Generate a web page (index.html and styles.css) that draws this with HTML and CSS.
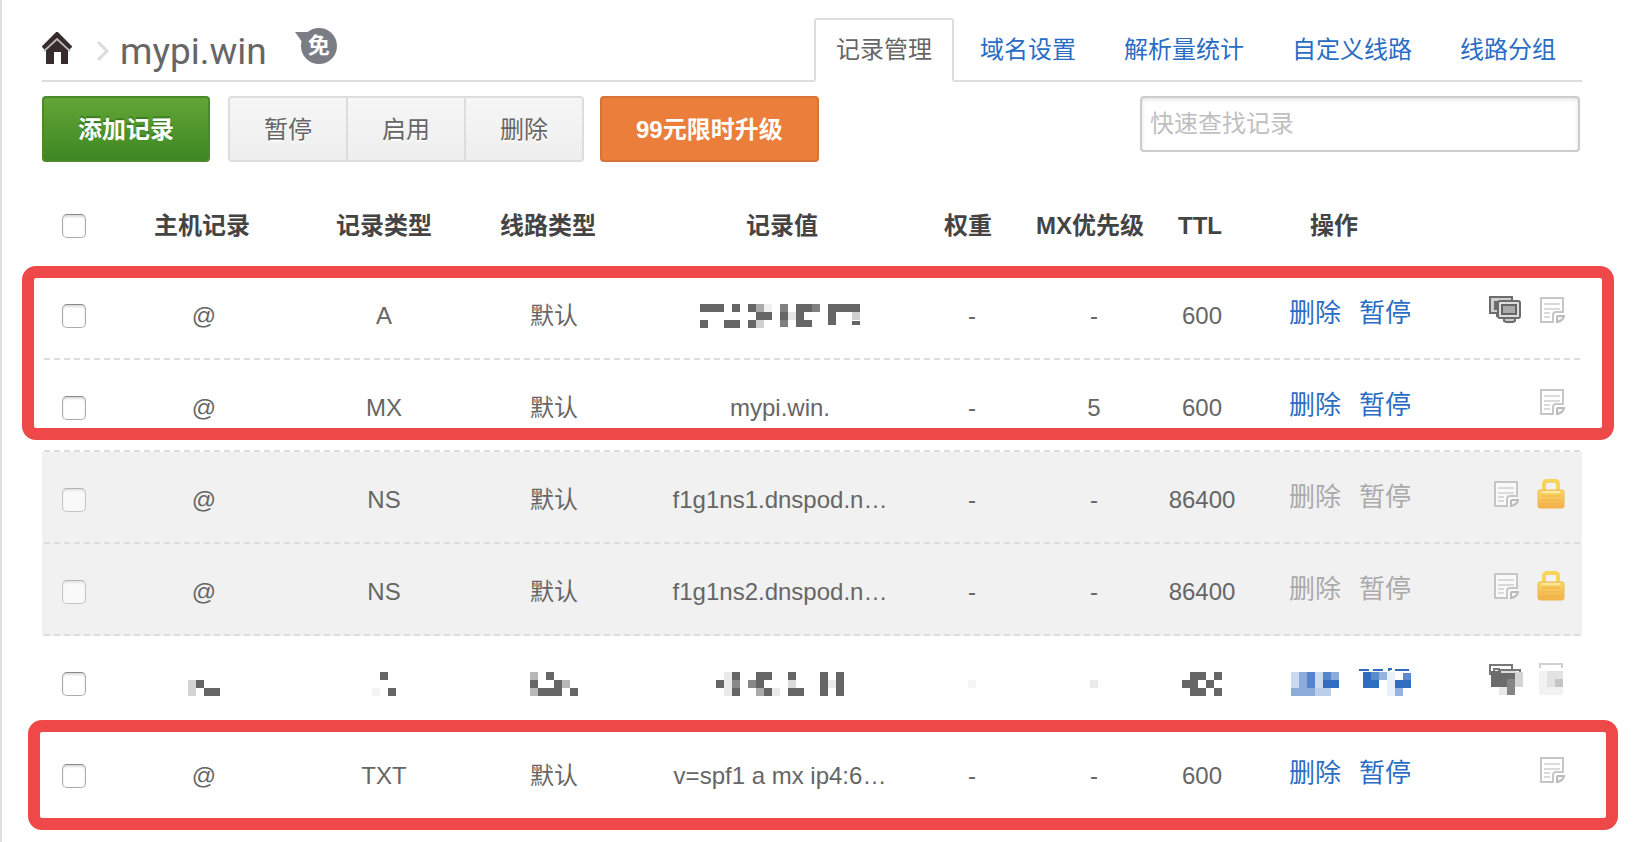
FILE: index.html
```
<!DOCTYPE html>
<html lang="zh-CN">
<head>
<meta charset="utf-8">
<title>mypi.win</title>
<link rel="stylesheet" href="styles.css">
</head>
<body>

<!-- 共用图标 -->
<svg class="sprite" aria-hidden="true">
  <linearGradient id="gold" x1="0" y1="0" x2="0" y2="1">
    <stop offset="0" stop-color="#fbd968"/>
    <stop offset="1" stop-color="#f3b049"/>
  </linearGradient>
  <symbol id="note" viewBox="0 0 26 28">
    <path d="M2 2h22v16l-6 8H2z" fill="#fff" fill-opacity=".6"/>
    <path d="M24 16V2H2v24h12v-7q0-3 3-3z" fill="none" stroke="#c6c6c6" stroke-width="2"/>
    <path d="M5 8h16M5 13h16M5 17h6M5 21h6" stroke="#dadada" stroke-width="2"/>
    <path d="M18 26v-5q0-1 1-1h6q-1 5-7 6z" fill="#f4f4f4" stroke="#bbb" stroke-width="2"/>
  </symbol>
  <symbol id="screens" viewBox="0 0 32 28">
    <path d="M2 2h21v15H2z" fill="#d0d0d0"/>
    <path d="M23 5V1H1v16h7v3h3" fill="none" stroke="#6c6c6c" stroke-width="2"/>
    <path d="M5 5h12v9H5z" fill="#6c6c6c"/>
    <path d="M15 22h11v3l-2 1h-7l-2-1z" fill="#ccc" stroke="#6c6c6c" stroke-width="2"/>
    <rect x="9" y="5" width="22" height="17" rx="2" fill="#dedede" stroke="#6c6c6c" stroke-width="2"/>
    <rect x="13" y="9" width="14" height="9" fill="#aaa" stroke="#666" stroke-width="2"/>
  </symbol>
  <symbol id="lock" viewBox="0 0 28 30">
    <path d="M7 12V5q0-3 3-3h8q3 0 3 3v7" fill="none" stroke="#f7d55a" stroke-width="4"/>
    <rect x="1" y="11" width="26" height="18" rx="2" fill="url(#gold)" stroke="#f0b54c"/>
    <path d="M4 17h20M4 21h20M4 25h20" stroke="#edb04a" stroke-width="1"/>
    <path d="M5 13h18" stroke="#fdeaa0" stroke-width="2"/>
  </symbol>
</svg>

<div class="header">
  <div class="crumbs">
    <a class="home" href="#" aria-label="首页">
      <svg width="30" height="32" viewBox="0 0 30 32">
        <path d="M4 15 15 4l11 11v17h-7V20h-7v12H4z" fill="#352c2b"/>
        <path d="M2 19 15 7l13 12" fill="none" stroke="#bbb7b6" stroke-width="2"/>
        <path d="M1 16 15 2l14 14" fill="none" stroke="#352c2b" stroke-width="4"/>
      </svg>
    </a>
    <svg class="arrow" width="14" height="20" viewBox="0 0 14 20">
      <path d="M2 1l9 9-9 9" fill="none" stroke="#dcdcdc" stroke-width="3"/>
    </svg>
    <h1 class="domain">mypi.win</h1>
    <span class="plan">免</span>
  </div>
  <div class="tabs">
    <a class="tab tab-on" href="#">记录管理</a>
    <a class="tab" href="#">域名设置</a>
    <a class="tab" href="#">解析量统计</a>
    <a class="tab" href="#">自定义线路</a>
    <a class="tab" href="#">线路分组</a>
  </div>
</div>

<div class="toolbar">
  <button class="btn btn-add">添加记录</button>
  <div class="btn-group">
    <button class="btn">暂停</button>
    <button class="btn">启用</button>
    <button class="btn">删除</button>
  </div>
  <button class="btn btn-up">99元限时升级</button>
  <input class="search" type="text" placeholder="快速查找记录" aria-label="快速查找记录">
</div>

<div class="records">
  <table class="table">
    <colgroup>
      <col class="c-check"><col class="c-host"><col class="c-type"><col class="c-line"><col class="c-value">
      <col class="c-weight"><col class="c-mx"><col class="c-ttl"><col class="c-ops"><col class="c-icons">
    </colgroup>
    <thead>
      <tr>
        <th><input type="checkbox" aria-label="全选"></th>
        <th class="th-left">主机记录</th>
        <th>记录类型</th>
        <th class="th-line">线路类型</th>
        <th class="th-value">记录值</th>
        <th class="th-mx">权重</th>
        <th class="th-mx">MX优先级</th>
        <th class="th-left">TTL</th>
        <th>操作</th>
        <th></th>
      </tr>
    </thead>
    <tbody>
      <tr>
        <td><input type="checkbox" aria-label="选择 A 记录"></td>
        <td>@</td>
        <td>A</td>
        <td>默认</td>
        <td>
          <svg class="mosaic" width="160" height="24" viewBox="0 0 160 24" fill="#666">
            <path d="M0 0h24v8H0zM0 16h8v8H0zM32 0h8v8h-8zM24 16h16v8H24zM48 0h8v8h16v8H56V8h-8zM48 16h8v8h-8zM96 0h16v16h0v7H96zM128 0h32v8h-24v13h-8zM152 17h8v4h-8z"/>
            <path d="M80 0h8v23h-8zM112 0h8v8h-8z" fill="#808080"/>
            <path d="M80 8h8v8h-8zM104 16h8v6h-8z"/>
            <path d="M104 8h8v8h-8z" fill="#fff"/>
            <path d="M56 0h8v8h-8z" fill="#aaa"/>
            <path d="M64 0h8v8h-8z" fill="#f0f0f0"/>
            <path d="M56 16h8v8h-8zM152 8h8v8h-8z" fill="#d0d0d0"/>
            <path d="M88 8h8v8h-8z" fill="#e6e6e6"/>
          </svg>
        </td>
        <td>-</td>
        <td>-</td>
        <td>600</td>
        <td class="ops"><a href="#">删除</a><a href="#">暂停</a></td>
        <td class="icons"><svg width="32" height="28"><use href="#screens"/></svg><svg width="26" height="28"><use href="#note"/></svg></td>
      </tr>
      <tr>
        <td><input type="checkbox" aria-label="选择 MX 记录"></td>
        <td>@</td>
        <td>MX</td>
        <td>默认</td>
        <td>mypi.win.</td>
        <td>-</td>
        <td>5</td>
        <td>600</td>
        <td class="ops"><a href="#">删除</a><a href="#">暂停</a></td>
        <td class="icons"><svg width="26" height="28"><use href="#note"/></svg></td>
      </tr>
      <tr class="locked">
        <td><input type="checkbox" aria-label="选择 NS 记录 1" disabled></td>
        <td>@</td>
        <td>NS</td>
        <td>默认</td>
        <td>f1g1ns1.dnspod.n…</td>
        <td>-</td>
        <td>-</td>
        <td>86400</td>
        <td class="ops"><a href="#">删除</a><a href="#">暂停</a></td>
        <td class="icons"><svg width="26" height="28"><use href="#note"/></svg><svg width="28" height="30"><use href="#lock"/></svg></td>
      </tr>
      <tr class="locked">
        <td><input type="checkbox" aria-label="选择 NS 记录 2" disabled></td>
        <td>@</td>
        <td>NS</td>
        <td>默认</td>
        <td>f1g1ns2.dnspod.n…</td>
        <td>-</td>
        <td>-</td>
        <td>86400</td>
        <td class="ops"><a href="#">删除</a><a href="#">暂停</a></td>
        <td class="icons"><svg width="26" height="28"><use href="#note"/></svg><svg width="28" height="30"><use href="#lock"/></svg></td>
      </tr>
      <!-- 打码的一行 -->
      <tr>
        <td><input type="checkbox" aria-label="选择记录"></td>
        <td>
          <svg class="mosaic" width="32" height="24" viewBox="0 0 32 24" fill="#666">
            <path d="M8 8h8v8H8zM16 16h16v8H16z"/>
            <path d="M0 8h8v16H0z" fill="#d4d4d4"/>
          </svg>
        </td>
        <td>
          <svg class="mosaic" width="24" height="24" viewBox="0 0 24 24" fill="#666">
            <path d="M8 0h8v8H8zM16 16h8v8h-8z"/>
            <path d="M0 16h8v8H0z" fill="#f4f4f4"/>
          </svg>
        </td>
        <td>
          <svg class="mosaic" width="48" height="24" viewBox="0 0 48 24" fill="#666">
            <path d="M0 8h8v8h16V8h8v16H8v-8H0zM16 0h8v8h-8zM40 16h8v8h-8z"/>
            <path d="M0 0h8v8H0zM32 8h8v8h-8zM0 16h8v8H0z" fill="#b8b8b8"/>
          </svg>
        </td>
        <td>
          <svg class="mosaic" width="128" height="24" viewBox="0 0 128 24" fill="#666">
            <path d="M0 8h8v8H0zM16 0h8v24h-8zM40 0h16v8h-8v8h8v8h-8v-8h-8zM72 0h8v8h-8zM72 16h16v8H72zM104 0h8v24h-8zM120 0h8v24h-8z"/>
            <path d="M16 8h8v8h-8zM32 8h8v8h-8z" fill="#888"/>
            <path d="M40 16h8v8h-8z" fill="#aaa"/>
            <path d="M72 8h8v8h-8z" fill="#dadada"/>
            <path d="M8 0h8v24H8zM56 16h8v8h-8zM112 8h8v8h-8z" fill="#eaeaea"/>
          </svg>
        </td>
        <td><svg class="mosaic" width="8" height="24"><path d="M0 8h8v8H0z" fill="#f5f5f5"/></svg></td>
        <td><svg class="mosaic" width="8" height="24"><path d="M0 8h8v8H0z" fill="#eaeaea"/></svg></td>
        <td>
          <svg class="mosaic" width="40" height="24" viewBox="0 0 40 24" fill="#666">
            <path d="M0 8h8V0h16v8h-8v8h8v8H8v-8H0zM24 8h8v8h-8zM32 0h8v8h-8zM32 16h8v8h-8z"/>
          </svg>
        </td>
        <td class="ops">
          <svg class="mosaic-link" width="124" height="30" viewBox="0 0 124 30">
            <path d="M2 4h8v16H2zM26 4h8v16h-8z" fill="#cbdaef"/>
            <path d="M10 4h8v16h-8zM2 20h24v8H2zM42 4h8v8h-8z" fill="#8cacdc"/>
            <path d="M18 4h8v16h-8zM34 4h8v8h-8z" fill="#5484ca"/>
            <path d="M34 12h16v8H34z" fill="#2e6dbf"/>
            <path d="M26 20h16v8H26z" fill="#bccfea"/>
            <path d="M74 4h16v16H74zM106 12h16v8h-16z" fill="#2e6dbf"/>
            <path d="M70 2h10M84 2h10M100 3v-2h3M106 2h14" stroke="#2e6dbf" stroke-width="2"/>
            <path d="M82 4h8v8h-8zM114 5h8v7h-8z" fill="#5a8bcf"/>
            <path d="M90 4h8v8h-8zM106 20h8v8h-8z" fill="#94b4e0"/>
            <path d="M98 4h8v24h-8z" fill="#e9f0fa"/>
          </svg>
        </td>
        <td class="icons">
          <svg class="mosaic-icon" width="76" height="32" viewBox="0 0 76 32">
            <path d="M1 12V2h22v4M5 12V6h6M10 11V7h21v3" fill="none" stroke="#777" stroke-width="2"/>
            <path d="M2 8h24v16H2z" fill="#6c6c6c"/>
            <path d="M12 9h15" stroke="#ddd" stroke-width="2"/>
            <path d="M18 16h8v16h-8z" fill="#858585"/>
            <path d="M26 9h8v15h-8z" fill="#d4d4d4"/>
            <path d="M10 24h8v8h-8z" fill="#e8e8e8"/>
            <path d="M51 5V1h22v4" fill="none" stroke="#d0d0d0" stroke-width="2"/>
            <path d="M50 8h24v24H50z" fill="#f2f2f2"/>
            <path d="M58 8h16v16H58z" fill="#e2e2e2"/>
            <path d="M66 16h8v8h-8z" fill="#c4c4c4"/>
          </svg>
        </td>
      </tr>
      <tr>
        <td><input type="checkbox" aria-label="选择 TXT 记录"></td>
        <td>@</td>
        <td>TXT</td>
        <td>默认</td>
        <td>v=spf1 a mx ip4:6…</td>
        <td>-</td>
        <td>-</td>
        <td>600</td>
        <td class="ops"><a href="#">删除</a><a href="#">暂停</a></td>
        <td class="icons"><svg width="26" height="28"><use href="#note"/></svg></td>
      </tr>
    </tbody>
  </table>
  <!-- 红框标注 -->
  <div class="mark mark1"></div>
  <div class="mark mark2"></div>
</div>

</body>
</html>
```
FILE: styles.css
```
* {
  box-sizing: border-box;
}

body {
  margin: 0;
  min-height: 100vh;
  padding: 18px 64px 12px 40px;
  border-left: 2px solid #e0e0e0;
  background: #fff;
  color: #666;
  font-family: "Liberation Sans", "Noto Sans CJK SC", sans-serif;
  font-size: 24px;
  line-height: 36px;
}

a {
  color: #2a6dc4;
  text-decoration: none;
}

.sprite {
  position: absolute;
  width: 0;
  height: 0;
}

/* 顶部: 面包屑 + 标签页 */
.header {
  display: flex;
  justify-content: space-between;
  height: 64px;
  border-bottom: 2px solid #ddd;
}

.crumbs {
  display: flex;
  align-items: center;
}

.home {
  margin-bottom: 2px;
}

.home svg,
.arrow {
  display: block;
}

.arrow {
  margin: 4px 10px 0 24px;
}

.domain {
  margin: 6px 0 0;
  font-family: Roboto, sans-serif;
  font-size: 37px;
  font-weight: normal;
  line-height: 44px;
}

.plan {
  position: relative;
  width: 36px;
  height: 36px;
  margin: 0 0 6px 34px;
  border-radius: 50%;
  background: #7b7d85;
  color: #fff;
  font-size: 22px;
  font-weight: bold;
  line-height: 36px;
  text-align: center;
}

/* 气泡的小尾巴 */
.plan::before {
  content: "";
  position: absolute;
  left: -6px;
  top: 4px;
  border-top: 14px solid #7b7d85;
  border-left: 10px solid transparent;
  border-right: 10px solid transparent;
}

.tabs {
  display: flex;
  gap: 4px;
  padding-right: 4px;
}

.tab {
  height: 64px;
  padding: 12px 20px 0;
  border: 2px solid transparent;
  white-space: nowrap;
}

.tab-on {
  border-color: #ddd;
  border-bottom-color: #fff;
  border-radius: 3px 3px 0 0;
  background: #fff;
  color: #666;
}

/* 工具栏 */
.toolbar {
  display: flex;
  align-items: flex-start;
  padding: 14px 2px 22px 0;
}

.btn {
  height: 66px;
  padding: 2px 34px 0;
  border: 2px solid #ddd;
  background: linear-gradient(#f6f6f6, #eee);
  color: #666;
  font: inherit;
  text-shadow: 0 2px 0 #fff;
  white-space: nowrap;
}

.btn-add {
  border-color: #4a8a29;
  border-radius: 4px;
  background: linear-gradient(#63a535, #3d8824);
  color: #fff;
  font-weight: bold;
  text-shadow: 0 -2px 0 #3d7d22;
}

.btn-group {
  display: flex;
  margin: 0 16px 0 18px;
}

.btn-group .btn + .btn {
  border-left: 0;
}

.btn-group .btn:first-child {
  border-radius: 4px 0 0 4px;
}

.btn-group .btn:last-child {
  border-radius: 0 4px 4px 0;
}

.btn-up {
  border-color: #d67337;
  border-radius: 4px;
  background: #eb7e3b;
  color: #fff;
  font-weight: bold;
  text-shadow: none;
}

.search {
  width: 440px;
  height: 56px;
  margin-left: auto;
  padding: 0 8px;
  border: 2px solid #ccc;
  border-radius: 4px;
  box-shadow: inset 0 2px 4px #e4e4e4;
  color: #666;
  font: inherit;
}

.search::placeholder {
  color: #bfbfbf;
}

/* 记录列表 */
.records {
  position: relative;
}

.table {
  width: 100%;
  border-collapse: separate;
  border-spacing: 0;
  table-layout: fixed;
  text-align: center;
}

.c-check { width: 64px; }
.c-host { width: 196px; }
.c-type { width: 164px; }
.c-line { width: 176px; }
.c-value { width: 276px; }
.c-weight { width: 108px; }
.c-mx { width: 136px; }
.c-ttl { width: 80px; }
.c-ops { width: 184px; }
.c-icons { width: 156px; }

th {
  height: 84px;
  padding: 0;
  color: #444;
  white-space: nowrap;
}

.th-left {
  padding-right: 4px;
}

.th-line {
  padding-right: 12px;
}

.th-value {
  padding-left: 4px;
}

.th-mx {
  padding-right: 8px;
}

td {
  height: 92px;
  padding: 4px 0 0;
  white-space: nowrap;
}

/* 虚线用渐变画，间隔才固定 */
tbody tr {
  background: repeating-linear-gradient(90deg, transparent 0 2px, #ddd 2px 8px, transparent 8px 10px) left bottom / 100% 2px no-repeat;
}

.locked {
  background-color: #f1f1f1;
}

.locked .ops a {
  color: #aaa;
}

.locked input {
  opacity: .6;
}

.table input {
  display: block;
  width: 24px;
  height: 24px;
  margin: 0 auto;
  appearance: none;
  border: 1px solid #aaa;
  border-top-color: #888;
  border-radius: 5px;
  background: #fff;
  box-shadow: inset 0 2px 2px #ddd;
}

.ops {
  padding: 0 0 2px 47px;
  font-size: 26px;
  text-align: left;
}

.ops a {
  margin-right: 18px;
}

.icons {
  padding: 0 17px 12px 0;
  text-align: right;
}

.icons svg {
  margin-left: 18px;
  vertical-align: middle;
}

.icons .mosaic-icon {
  margin-top: 4px;
}

.mosaic,
.mosaic-link {
  vertical-align: middle;
}

.mosaic {
  margin-bottom: 4px;
}

/* 红框 */
.mark {
  position: absolute;
  border: 12px solid #ee4948;
  border-radius: 14px;
  pointer-events: none;
}

.mark1 {
  top: 82px;
  left: -20px;
  right: -32px;
  height: 174px;
}

.mark2 {
  top: 536px;
  left: -14px;
  right: -36px;
  height: 110px;
}
```
